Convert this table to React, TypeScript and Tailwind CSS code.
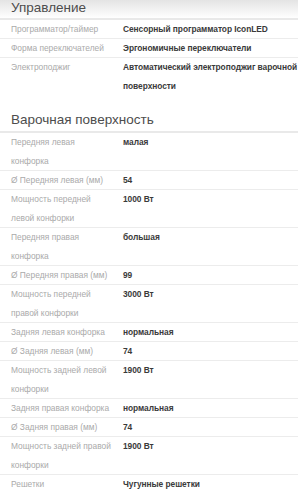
import React from "react";

type Row = [string, string[]];

const control: Row[] = [
  ["Программатор/таймер", ["Сенсорный программатор IconLED"]],
  ["Форма переключателей", ["Эргономичные переключатели"]],
  ["Электроподжиг", ["Автоматический электроподжиг варочной", "поверхности"]],
];

const hob: Row[] = [
  ["Передняя левая конфорка", ["малая"]],
  ["Ø Передняя левая (мм)", ["54"]],
  ["Мощность передней левой конфорки", ["1000 Вт"]],
  ["Передняя правая конфорка", ["большая"]],
  ["Ø Передняя правая (мм)", ["99"]],
  ["Мощность передней правой конфорки", ["3000 Вт"]],
  ["Задняя левая конфорка", ["нормальная"]],
  ["Ø Задняя левая (мм)", ["74"]],
  ["Мощность задней левой конфорки", ["1900 Вт"]],
  ["Задняя правая конфорка", ["нормальная"]],
  ["Ø Задняя правая (мм)", ["74"]],
  ["Мощность задней правой конфорки", ["1900 Вт"]],
  ["Решетки", ["Чугунные решетки"]],
];

function Rows({ rows }: { rows: Row[] }) {
  return (
    <div>
      {rows.map(([k, v], i) => (
        <div
          key={i}
          className={
            "grid grid-cols-[123px_175px] leading-[19px] " +
            (i < rows.length - 1 ? "shadow-[inset_0_-1px_0_#ececec]" : "")
          }
        >
          <div className="pl-[11px] pr-[12px] text-[8.4px] text-[#aaaaaa]">{k}</div>
          <div className="flex flex-col text-[8.4px] font-bold tracking-[-0.05px] text-[#3a3a3a]">
            {v.map((line, j) => (
              <span key={j} className="whitespace-nowrap">
                {line}
              </span>
            ))}
          </div>
        </div>
      ))}
    </div>
  );
}

export default function App() {
  return (
    <div
      className="w-[298px] h-[500px] overflow-hidden bg-white"
      style={{ fontFamily: '"Liberation Sans", Arial, sans-serif' }}
    >
      <div className="h-[20px] bg-gradient-to-b from-[#e4e4e4] to-white border-b-2 border-[#e9e9e9] pl-[11px] text-[13.5px] leading-[16px] text-[#4d4d4d]">
        Управление
      </div>
      <Rows rows={control} />
      <div className="mt-[15px] h-[22px] border-b-2 border-[#e9e9e9] pl-[11px] text-[13.5px] leading-[18px] text-[#4d4d4d]">
        Варочная поверхность
      </div>
      <Rows rows={hob} />
    </div>
  );
}
